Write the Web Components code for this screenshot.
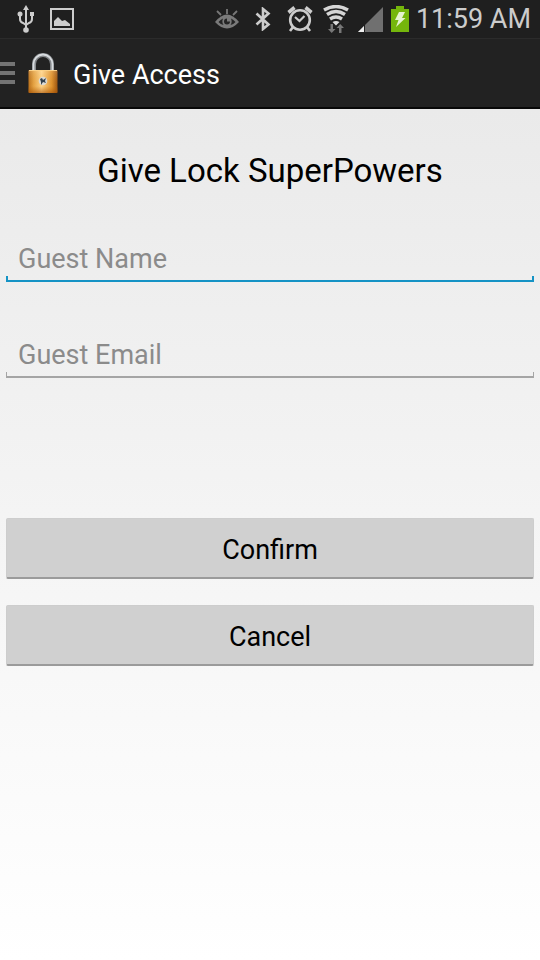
<!DOCTYPE html>
<html lang="en">
<head>
<meta charset="utf-8">
<meta name="viewport" content="width=device-width, initial-scale=1">
<title>Give Access</title>
<style>
html, body { margin: 0; min-height: 100%; }
body { font-family: Roboto, "Liberation Sans", sans-serif; background: #fff; color: #000; }
</style>
</head>
<body>
<access-app></access-app>
<script>
const define = (name, html, setup) => customElements.define(name, class extends HTMLElement {
  constructor() {
    super();
    this.attachShadow({ mode: "open" }).innerHTML = html;
  }
  connectedCallback() { if (setup) setup(this, this.shadowRoot); }
});

const glyphs = {
  usb: [18, 28, `<g fill="none" stroke="#ccc" stroke-width="2"><path d="M9 4V24M3 10v4q0 3 3 4l3 2M15 10v4q0 3-3 4l-3 2"/></g><g fill="#ccc"><path d="M9 0l3 5H6z"/><circle cx="3" cy="9" r="2.5"/><path d="M13 7h4v4h-4z"/><circle cx="9" cy="25" r="2.8"/></g>`],
  picture: [24, 22, `<path d="M1 1h22v20H1z" fill="none" stroke="#ccc" stroke-width="2"/><path d="M4 18v-5l4-4 4 4 3-1 5 4v2z" fill="#ccc"/>`],
  eye: [24, 20, `<g stroke="#777" stroke-width="1.8"><path d="M2 2l4 4M12 0v5M22 2l-4 4"/></g><path d="M0 13q12-15 24 0-12 13-24 0z" fill="#7a7a7a"/><path d="M3.500 13q2-2.500 4.500-3.500-1.500 3.500.5 6.500-3-.5-5-3zM20.500 13q-2-2.500-4.500-3.500 1.500 3.500-.5 6.500 3-.5 5-3z" fill="#242424"/><path d="M12 9.500a3 3 0 103 3h-3z" fill="#242424"/>`],
  bluetooth: [16, 24, `<path d="M1.500 6.500l12 11-5.500 4.500V2l5.500 4.500-12 11" fill="none" stroke="#ccc" stroke-width="2.600"/>`],
  alarm: [26, 26, `<g fill="none" stroke="#ccc"><circle cx="13" cy="14" r="9.800" stroke-width="2.600"/><path d="M8 11l4.500 4 5-5" stroke-width="2.200"/><path d="M1.500 6.500l6-5M24.500 6.500l-6-5" stroke-width="3.600"/><path d="M6 21l-3 4M20 21l3 4" stroke-width="2.600"/></g>`],
  wifi: [28, 28, `<g fill="none" stroke="#d5d5d5" stroke-width="3.400"><path d="M2 5q12-7 24 0M5 9.500q9-6 18 0M8 14q6-4 12 0"/></g><path d="M10.500 17q3.500-2 7 0L14 20.500z" fill="#ddd"/><g fill="#777"><path d="M8.500 19H11v5h2.500l-3.800 4L6 24h2.500zM17 28h2.500v-5H22l-3.800-4-3.700 4H17z"/></g>`],
  signal: [26, 26, `<path d="M26 1v25H1z" fill="#707070"/><path d="M7 20v6H1z" fill="#eee"/><path d="M7 19h1v7H7z" fill="#1f1f1f"/>`],
  battery: [20, 26, `<path d="M6 0h8v3h5v23H1V3h5z" fill="#75b60c"/><path d="M9 6h6l-3 6h3.500L6 21l2.500-7H5z" fill="#e5f3d0"/>`],
  menu: [15, 24, `<g fill="#747474"><path d="M0 1h15v4H0zM0 10h15v4H0zM0 19h15v4H0z"/></g>`],
  lock: [32, 42, `<defs><linearGradient id="g" x2="1"><stop stop-color="#b9701b"/><stop offset=".18" stop-color="#e5a343"/><stop offset=".45" stop-color="#ffd489"/><stop offset=".8" stop-color="#df932d"/><stop offset="1" stop-color="#9b5511"/></linearGradient><linearGradient id="h" y2="1" x2="0"><stop stop-color="#fff" stop-opacity=".15"/><stop offset=".7" stop-color="#b86409" stop-opacity="0"/><stop offset="1" stop-color="#a14d05" stop-opacity=".6"/></linearGradient></defs><path d="M7 20V12a9 9 0 0118 0v8" fill="none" stroke="#85888b" stroke-width="4"/><path d="M6.500 19V12a9.500 9.500 0 0119 0v7" fill="none" stroke="#d8dcdf" stroke-width="1.800"/><rect x="1.500" y="18" width="29" height="23" rx="1" fill="url(#g)"/><rect x="1.500" y="18" width="29" height="23" rx="1" fill="url(#h)"/><path d="M2 18.500h28" stroke="#fbd187"/><circle cx="16" cy="29" r="4.300" fill="#dcdad3"/><path d="M13 27l2-1 1 2 3-2-1 3 1 2-3-1-2 3v-3z" fill="#34424e"/>`]
};
define("ui-glyph", `<style>:host{display:block;flex:none}svg{display:block}</style><svg aria-hidden="true"></svg>`, (el, root) => {
  const [w, h, art] = glyphs[el.getAttribute("name")];
  const svg = root.querySelector("svg");
  svg.setAttribute("width", w);
  svg.setAttribute("height", h);
  svg.setAttribute("viewBox", `0 0 ${w} ${h}`);
  svg.innerHTML = art;
});

define("status-bar", `<style>
:host{display:flex;align-items:center;justify-content:space-between;height:38px;padding:0 9px 0 17px;background:#1f1f1f;color:#ccc;font-size:27px;line-height:32px;box-sizing:border-box}
div{display:flex;align-items:center}
.notices{gap:15px}.system{gap:6px}.icons{gap:7px}
.radio{gap:16px;padding-right:3px}.clock{white-space:nowrap}
</style>
<div class="notices"><ui-glyph name="usb"></ui-glyph><ui-glyph name="picture"></ui-glyph></div>
<div class="system"><div class="radio"><ui-glyph name="eye"></ui-glyph><ui-glyph name="bluetooth"></ui-glyph><ui-glyph name="alarm"></ui-glyph></div>
<div class="icons"><ui-glyph name="wifi"></ui-glyph><ui-glyph name="signal"></ui-glyph><ui-glyph name="battery"></ui-glyph></div><span class="clock">11:59 AM</span></div>`);

define("action-bar", `<style>
:host{display:flex;align-items:center;height:71px;box-sizing:border-box;background:#222;border-top:1px solid #2b2b2b;border-bottom:2px solid #080808;color:#fff}
button{display:flex;align-items:center;gap:12px;height:100%;padding:0;border:0;background:none}
h1{margin:0 0 0 14px;padding-top:4px;font-size:27px;line-height:32px;font-weight:400}
</style>
<button aria-label="Open menu"><ui-glyph name="menu"></ui-glyph><ui-glyph name="lock"></ui-glyph></button><h1><slot></slot></h1>`);

define("text-field", `<style>
:host{display:block}
input{display:block;width:100%;height:48px;box-sizing:border-box;margin:0;padding:2px 12px 0;border:0;outline:0;border-radius:0;font:400 27px/32px Roboto,"Liberation Sans",sans-serif;color:#000;
--line:#a5a5a5;--weight:2px;--side:1px;
background:linear-gradient(var(--line),var(--line)) bottom/100% var(--weight) no-repeat,linear-gradient(var(--line),var(--line)) left bottom/var(--side) 6px no-repeat,linear-gradient(var(--line),var(--line)) right bottom/var(--side) 6px no-repeat}
:host([active]) input{--line:#1593c5;--side:2px}
input::placeholder{color:#8b8b8b;opacity:1}
</style><input>`, (el, root) => {
  const input = root.querySelector("input");
  input.type = el.getAttribute("type");
  input.placeholder = el.getAttribute("label");
  input.setAttribute("aria-label", el.getAttribute("label"));
});

define("wide-button", `<style>
:host{display:block}
button{display:block;width:100%;height:61px;margin:0;padding:4px 8px 0;border:1px solid #cdcdcd;border-bottom:2px solid #9b9b9b;border-radius:2px;background:#d0d0d0;font:400 27px/32px Roboto,"Liberation Sans",sans-serif;color:#000}
</style><button type="button"><slot></slot></button>`);

define("access-form", `<style>
:host{display:block;padding:40px 6px}
h2{margin:0 0 42px;text-align:center;font-size:33px;line-height:43px;font-weight:400}
form{display:grid;gap:48px}
.fields{display:grid;gap:48px}.actions{display:grid;gap:26px;padding-top:92px}
</style>
<h2>Give Lock SuperPowers</h2>
<form><div class="fields"><text-field label="Guest Name" type="text" active></text-field><text-field label="Guest Email" type="email"></text-field></div>
<div class="actions"><wide-button>Confirm</wide-button><wide-button>Cancel</wide-button></div></form>`);

define("access-app", `<style>
:host{display:flex;flex-direction:column;min-height:100vh}
main{flex:1;background:linear-gradient(#eaeaea,#fff)}
</style>
<status-bar></status-bar><action-bar>Give Access</action-bar><main><access-form></access-form></main>`);
</script>
</body>
</html>
